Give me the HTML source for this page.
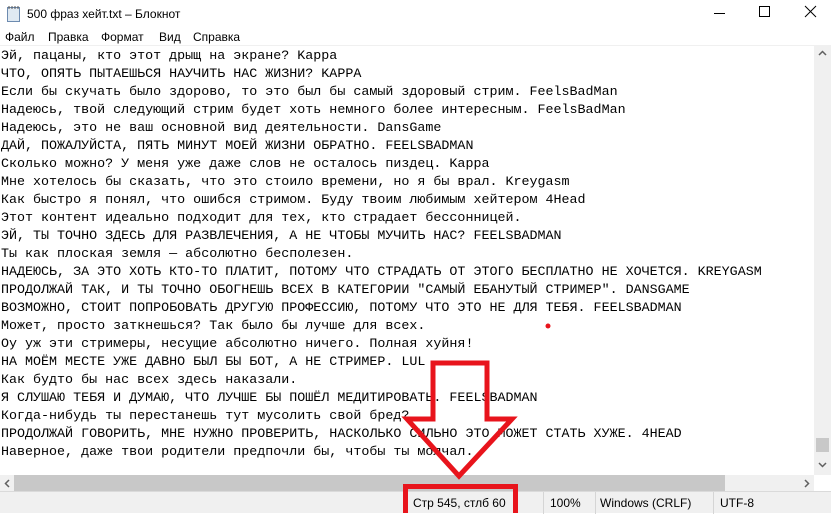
<!DOCTYPE html>
<html><head><meta charset="utf-8">
<style>
*{margin:0;padding:0;box-sizing:border-box}
body{width:831px;height:513px;overflow:hidden;background:#fff;font-family:"Liberation Sans","DejaVu Sans",sans-serif;position:relative}
.title{position:absolute;left:0;top:0;width:831px;height:30px;background:#fff;font-size:12px;color:#000}
.title .t{position:absolute;left:27px;top:7px}
.menu{position:absolute;left:0;top:30px;height:17px;font-size:12px;color:#000}
.menu span{position:absolute;top:0;white-space:nowrap}
.sep{position:absolute;left:0;top:45px;width:831px;height:1px;background:#f0f0f0}
.text{position:absolute;left:1px;top:48px;font-family:"Liberation Mono","DejaVu Sans Mono",monospace;font-size:13.35px;line-height:18px;color:#000;white-space:pre}
.vs{position:absolute;left:814px;top:46px;width:17px;height:429px;background:#f0f0f0}
.hs{position:absolute;left:0;top:475px;width:814px;height:16px;background:#f0f0f0}
.thumb{position:absolute;left:14px;top:475px;width:711px;height:16px;background:#c8c8c8}
.status{position:absolute;left:0;top:491px;width:831px;height:22px;background:#f0f0f0;border-top:1px solid #dadada;font-size:12px;color:#000}
.status span{position:absolute;top:4px}
.status i{position:absolute;top:0;width:1px;height:22px;background:#d5d5d5}
</style></head><body>
<div class="title">
<svg style="position:absolute;left:6px;top:5px" width="16" height="18"><rect x="1.5" y="2.5" width="12" height="14" fill="#dfe9f2" stroke="#6d8bb0"/><line x1="3" y1="1" x2="3" y2="4" stroke="#555"/><line x1="6" y1="1" x2="6" y2="4" stroke="#555"/><line x1="9" y1="1" x2="9" y2="4" stroke="#555"/><line x1="12" y1="1" x2="12" y2="4" stroke="#555"/></svg>
<span class="t">500 фраз хейт.txt – Блокнот</span>
<svg style="position:absolute;left:713px;top:6px" width="14" height="14"><line x1="1" y1="7.5" x2="12" y2="7.5" stroke="#000"/></svg>
<svg style="position:absolute;left:758px;top:5px" width="14" height="14"><rect x="1.5" y="1.5" width="10" height="10" fill="none" stroke="#000"/></svg>
<svg style="position:absolute;left:804px;top:5px" width="14" height="14"><path d="M1 1L12 12M12 1L1 12" stroke="#000"/></svg>
</div>
<div class="menu"><span style="left:5px">Файл</span><span style="left:48px">Правка</span><span style="left:101px">Формат</span><span style="left:159px">Вид</span><span style="left:193px">Справка</span></div>
<div class="sep"></div>
<div class="text">Эй, пацаны, кто этот дрыщ на экране? Kappa
ЧТО, ОПЯТЬ ПЫТАЕШЬСЯ НАУЧИТЬ НАС ЖИЗНИ? KAPPA
Если бы скучать было здорово, то это был бы самый здоровый стрим. FeelsBadMan
Надеюсь, твой следующий стрим будет хоть немного более интересным. FeelsBadMan
Надеюсь, это не ваш основной вид деятельности. DansGame
ДАЙ, ПОЖАЛУЙСТА, ПЯТЬ МИНУТ МОЕЙ ЖИЗНИ ОБРАТНО. FEELSBADMAN
Сколько можно? У меня уже даже слов не осталось пиздец. Kappa
Мне хотелось бы сказать, что это стоило времени, но я бы врал. Kreygasm
Как быстро я понял, что ошибся стримом. Буду твоим любимым хейтером 4Head
Этот контент идеально подходит для тех, кто страдает бессонницей.
ЭЙ, ТЫ ТОЧНО ЗДЕСЬ ДЛЯ РАЗВЛЕЧЕНИЯ, А НЕ ЧТОБЫ МУЧИТЬ НАС? FEELSBADMAN
Ты как плоская земля — абсолютно бесполезен.
НАДЕЮСЬ, ЗА ЭТО ХОТЬ КТО-ТО ПЛАТИТ, ПОТОМУ ЧТО СТРАДАТЬ ОТ ЭТОГО БЕСПЛАТНО НЕ ХОЧЕТСЯ. KREYGASM
ПРОДОЛЖАЙ ТАК, И ТЫ ТОЧНО ОБОГНЕШЬ ВСЕХ В КАТЕГОРИИ "САМЫЙ ЕБАНУТЫЙ СТРИМЕР". DANSGAME
ВОЗМОЖНО, СТОИТ ПОПРОБОВАТЬ ДРУГУЮ ПРОФЕССИЮ, ПОТОМУ ЧТО ЭТО НЕ ДЛЯ ТЕБЯ. FEELSBADMAN
Может, просто заткнешься? Так было бы лучше для всех.
Оу уж эти стримеры, несущие абсолютно ничего. Полная хуйня!
НА МОЁМ МЕСТЕ УЖЕ ДАВНО БЫЛ БЫ БОТ, А НЕ СТРИМЕР. LUL
Как будто бы нас всех здесь наказали.
Я СЛУШАЮ ТЕБЯ И ДУМАЮ, ЧТО ЛУЧШЕ БЫ ПОШЁЛ МЕДИТИРОВАТЬ. FEELSBADMAN
Когда-нибудь ты перестанешь тут мусолить свой бред?
ПРОДОЛЖАЙ ГОВОРИТЬ, МНЕ НУЖНО ПРОВЕРИТЬ, НАСКОЛЬКО СИЛЬНО ЭТО МОЖЕТ СТАТЬ ХУЖЕ. 4HEAD
Наверное, даже твои родители предпочли бы, чтобы ты молчал.</div>
<div class="vs"><svg style="position:absolute;left:4px;top:4px" width="9" height="6"><path d="M1 5L4.5 1.5L8 5" fill="none" stroke="#606060" stroke-width="1.5"/></svg>
<div style="position:absolute;left:2px;top:392px;width:13px;height:14px;background:#c8c8c8"></div>
<svg style="position:absolute;left:4px;top:416px" width="9" height="6"><path d="M1 1L4.5 4.5L8 1" fill="none" stroke="#606060" stroke-width="1.5"/></svg></div>
<div class="hs"><svg style="position:absolute;left:4px;top:4px" width="6" height="9"><path d="M5 1L1.5 4.5L5 8" fill="none" stroke="#606060" stroke-width="1.5"/></svg>
<svg style="position:absolute;left:804px;top:4px" width="6" height="9"><path d="M1 1L4.5 4.5L1 8" fill="none" stroke="#606060" stroke-width="1.5"/></svg></div>
<div class="thumb"></div>
<div class="status"><span style="left:413px">Стр 545, стлб 60</span><i style="left:543px"></i><span style="left:550px">100%</span><i style="left:595px"></i><span style="left:600px">Windows (CRLF)</span><i style="left:713px"></i><span style="left:720px">UTF-8</span></div>
<svg style="position:absolute;left:0;top:0" width="831" height="513">
<path d="M433 363H487V419H512L459 476L407 419H433Z" fill="none" stroke="#e8141c" stroke-width="5" stroke-linejoin="miter"/>
<rect x="405.5" y="486.5" width="110" height="30" fill="none" stroke="#e8141c" stroke-width="5"/>
<circle cx="548" cy="326" r="2.5" fill="#e8141c"/>
</svg>
</body></html>
